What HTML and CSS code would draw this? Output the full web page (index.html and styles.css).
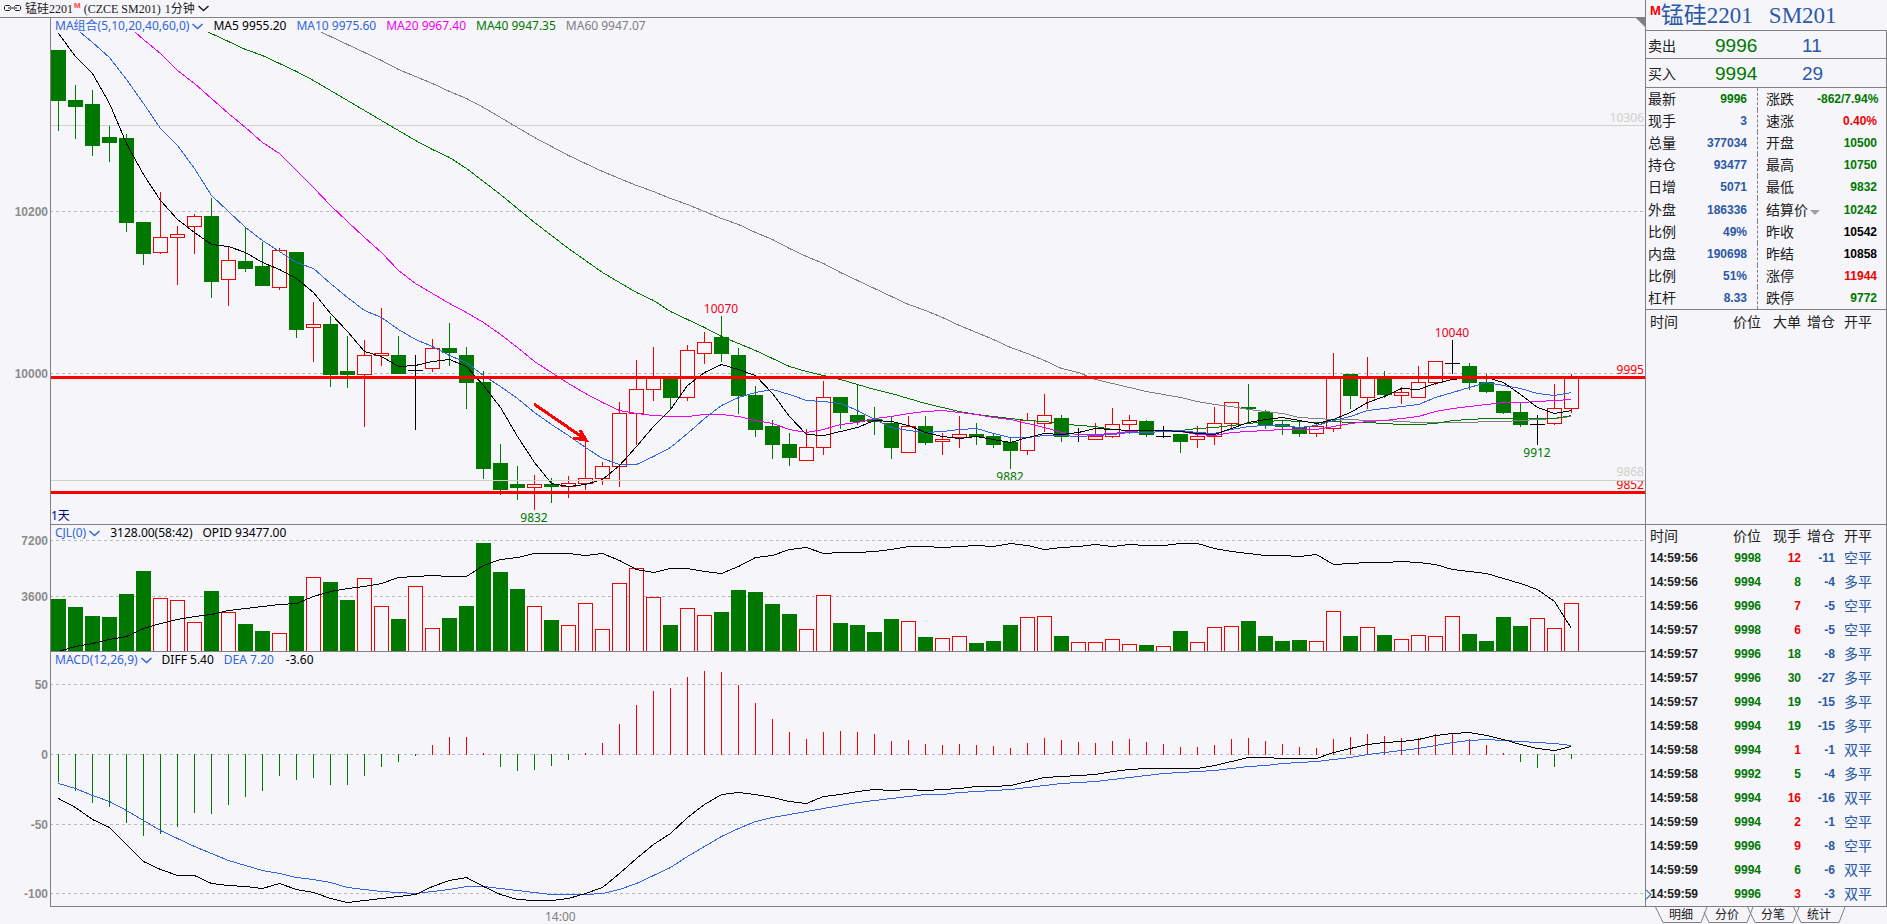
FILE: index.html
```html
<!DOCTYPE html>
<html lang="zh-CN">
<head>
<meta charset="utf-8">
<title>锰硅2201 SM201</title>
<link rel="stylesheet" href="styles.css">
</head>
<body>
<div class="app">
  <div class="work">
    <main class="charts">
      <header class="topbar">
        <svg class="link-icon" width="17" height="7" viewBox="0 0 17 7" aria-hidden="true"><path d="M6.500 2V1.500L5.500 .500H1.500L.500 1.500V4.500L1.500 5.500H5.500L6.500 4.500V4M10.500 2V1.500L11.500 .500H15.500L16.500 1.500V4.500L15.500 5.500H11.500L10.500 4.500V4M4 3H13"/></svg>
        <span class="name">锰硅2201</span><sup class="flag">M</sup><span class="code">(CZCE SM201)</span>
        <button class="drop" type="button">1分钟<svg class="chev" width="11" height="7" viewBox="0 0 11 7" aria-hidden="true"><path d="M.5 1L5.500 5.500L10.500 1"/></svg></button>
      </header>
      <section class="pane" aria-label="K线">
        <svg class="plot" id="price"></svg>
        <div class="legend">
          <button class="drop blue" type="button">MA组合(5,10,20,40,60,0)<svg class="chev" width="11" height="7" viewBox="0 0 11 7" aria-hidden="true"><path d="M.5 1L5.500 5.500L10.500 1"/></svg></button>
          <span>MA5 9955.20</span><span class="blue">MA10 9975.60</span><span class="pink">MA20 9967.40</span><span class="green">MA40 9947.35</span><span class="gray">MA60 9947.07</span>
        </div>
        <svg class="corner" width="9" height="9" viewBox="0 0 9 9" aria-hidden="true"><path d="M0 0H9V9Z"/></svg>
      </section>
      <section class="pane" aria-label="成交量">
        <svg class="plot" id="volume"></svg>
        <div class="legend">
          <button class="drop blue" type="button">CJL(0)<svg class="chev" width="11" height="7" viewBox="0 0 11 7" aria-hidden="true"><path d="M.5 1L5.500 5.500L10.500 1"/></svg></button>
          <span>3128.00(58:42)</span><span>OPID 93477.00</span>
        </div>
      </section>
      <section class="pane" aria-label="MACD">
        <svg class="plot" id="macd"></svg>
        <div class="legend">
          <button class="drop blue" type="button">MACD(12,26,9)<svg class="chev" width="11" height="7" viewBox="0 0 11 7" aria-hidden="true"><path d="M.5 1L5.500 5.500L10.500 1"/></svg></button>
          <span>DIFF 5.40</span><span class="blue">DEA 7.20</span><span class="bar-value">-3.60</span>
        </div>
      </section>
    </main>
    <aside class="side">
      <h1 class="title"><sup>M</sup><span>锰硅2201</span><span>SM201</span></h1>
      <div class="offer"><span>卖出</span><b class="green">9996</b><b class="navy">11</b></div>
      <div class="offer bid"><span>买入</span><b class="green">9994</b><b class="navy">29</b></div>
      <table class="quote">
        <tbody>
        <tr><th>最新</th><td class="green">9996</td><th>涨跌</th><td class="green">-862/7.94%</td></tr>
        <tr><th>现手</th><td>3</td><th>速涨</th><td class="red">0.40%</td></tr>
        <tr><th>总量</th><td>377034</td><th>开盘</th><td class="green">10500</td></tr>
        <tr><th>持仓</th><td>93477</td><th>最高</th><td class="green">10750</td></tr>
        <tr><th>日增</th><td>5071</td><th>最低</th><td class="green">9832</td></tr>
        <tr><th>外盘</th><td>186336</td><th>结算价<i class="tri"></i></th><td class="green">10242</td></tr>
        <tr><th>比例</th><td>49%</td><th>昨收</th><td class="black">10542</td></tr>
        <tr><th>内盘</th><td>190698</td><th>昨结</th><td class="black">10858</td></tr>
        <tr><th>比例</th><td>51%</td><th>涨停</th><td class="red">11944</td></tr>
        <tr><th>杠杆</th><td>8.33</td><th>跌停</th><td class="green">9772</td></tr>
        </tbody>
      </table>
      <div class="big">
        <table class="ticks">
          <thead><tr><th>时间</th><th>价位</th><th>大单</th><th>增仓</th><th>开平</th></tr></thead>
        </table>
      </div>
      <table class="ticks">
        <thead><tr><th>时间</th><th>价位</th><th>现手</th><th>增仓</th><th>开平</th></tr></thead>
        <tbody>
        <tr><td>14:59:56</td><td>9998</td><td class="red">12</td><td>-11</td><td>空平</td></tr>
        <tr><td>14:59:56</td><td>9994</td><td class="green">8</td><td>-4</td><td>多平</td></tr>
        <tr><td>14:59:56</td><td>9996</td><td class="red">7</td><td>-5</td><td>空平</td></tr>
        <tr><td>14:59:57</td><td>9998</td><td class="red">6</td><td>-5</td><td>空平</td></tr>
        <tr><td>14:59:57</td><td>9996</td><td class="green">18</td><td>-8</td><td>多平</td></tr>
        <tr><td>14:59:57</td><td>9996</td><td class="green">30</td><td>-27</td><td>多平</td></tr>
        <tr><td>14:59:57</td><td>9994</td><td class="green">19</td><td>-15</td><td>多平</td></tr>
        <tr><td>14:59:58</td><td>9994</td><td class="green">19</td><td>-15</td><td>多平</td></tr>
        <tr><td>14:59:58</td><td>9994</td><td class="red">1</td><td>-1</td><td>双平</td></tr>
        <tr><td>14:59:58</td><td>9992</td><td class="green">5</td><td>-4</td><td>多平</td></tr>
        <tr><td>14:59:58</td><td>9994</td><td class="red">16</td><td>-16</td><td>双平</td></tr>
        <tr><td>14:59:59</td><td>9994</td><td class="red">2</td><td>-1</td><td>空平</td></tr>
        <tr><td>14:59:59</td><td>9996</td><td class="red">9</td><td>-8</td><td>空平</td></tr>
        <tr><td>14:59:59</td><td>9994</td><td class="green">6</td><td>-6</td><td>双平</td></tr>
        <tr class="last"><td>14:59:59</td><td>9996</td><td class="red">3</td><td>-3</td><td>双平</td></tr>
        </tbody>
      </table>
    </aside>
  </div>
  <footer class="foot">
    <div class="time-axis"><time>14:00</time></div>
    <nav class="tabs">
      <button type="button"><svg viewBox="0 0 54 16" width="54" height="16" aria-hidden="true"><path d="M.5 0L8 15.500H46L52 0"/></svg>明细</button>
      <button type="button"><svg viewBox="0 0 54 16" width="54" height="16" aria-hidden="true"><path d="M3 5L8 15.500H46L52 0"/></svg>分价</button>
      <button type="button"><svg viewBox="0 0 54 16" width="54" height="16" aria-hidden="true"><path d="M.5 0L8 15.500H46L52 0"/></svg>分笔</button>
      <button type="button"><svg viewBox="0 0 54 16" width="54" height="16" aria-hidden="true"><path d="M.5 0L8 15.500H46L52 0"/></svg>统计</button>
    </nav>
  </footer>
</div>
<script src="chart.js"></script>
</body>
</html>
```
FILE: styles.css
```css
:root {
  --bg: #f5f5fa;
  --frame: #808080;
  --red: #f00000;
  --green: #007800;
  --blue: #3264dc;
  --navy: #2c58a6;
  --ui: "Noto Sans", "Noto Sans CJK SC", sans-serif;
  --num: "Liberation Sans", "Noto Sans CJK SC", sans-serif;
}
* { box-sizing: border-box; }
body { margin: 0; background: var(--bg); color: #000; font: 12px/16px var(--ui); }
button { border: 0; padding: 0; background: none; color: inherit; font: inherit; }
svg { flex: none; }

.app { display: flex; flex-direction: column; min-height: 100vh; }
.work { flex: 1; display: flex; }
.charts { flex: 1; min-width: 0; display: grid; grid-template-rows: 18px minmax(0, 507fr) minmax(0, 127fr) minmax(0, 255fr); }

.topbar { display: flex; align-items: center; padding-left: 4px; border-bottom: 1px solid var(--frame); font-family: "Liberation Serif", "Noto Sans CJK SC", serif; color: #202020; white-space: nowrap; }
.topbar .name { margin-left: 4px; }
.topbar .flag { align-self: flex-start; margin: 2px 3px 0 1px; color: #ff4040; font: bold 8px/8px "Liberation Sans", sans-serif; }
.topbar .drop { margin-left: 4px; }
.link-icon path { fill: none; stroke: #202020; }
.drop { display: flex; align-items: center; gap: 3px; white-space: nowrap; }
.chev path { fill: none; stroke: currentColor; stroke-width: 1.5; }

.pane { position: relative; min-height: 0; }
.plot { position: absolute; inset: 0; width: 100%; height: 100%; display: block; }
.legend { position: relative; display: flex; gap: 10px; height: 16px; padding-left: 55px; white-space: nowrap; }
.bar-value { margin-left: 2px; }
.corner { position: absolute; top: 0; right: 0; fill: var(--frame); }

.blue { color: var(--blue); }
.pink { color: #f000f0; }
.gray { color: #808080; }
.navy { color: var(--navy); }
.plot * { shape-rendering: crispEdges; }
.plot text { font: 12px var(--ui); }
.plot .axis { font: bold 12px "Liberation Sans", sans-serif; fill: #8c8c8c; text-anchor: end; }
.frame { stroke: var(--frame); }
.grid { stroke: #b8b8c0; stroke-dasharray: 3 3; }
.level { stroke: #d0d0c8; }
.support { stroke: #f00; stroke-width: 3; }
.line { fill: none; stroke-width: 1; }
.up { fill: var(--red); }
.down { fill: var(--green); }
.flat { fill: #000; }
.hollow { fill: var(--bg); stroke: var(--red); }
.arrow { fill: none; stroke: #f00; stroke-width: 3; }

.side { width: 242px; display: flex; flex-direction: column; border: solid var(--frame); border-width: 0 1px 1px; color: #202020; }
.title { display: flex; height: 31px; margin: 0 -1px 0 0; padding-left: 4px; border-bottom: 1px solid var(--frame); background: var(--bg); color: var(--navy); font: 23px/32px "Liberation Serif", "Noto Sans CJK SC", serif; white-space: nowrap; }
.title sup { margin-top: 4px; color: var(--red); font: bold 13px/13px "Liberation Sans", sans-serif; }
.title span + span { margin-left: 16px; }
.offer { display: grid; grid-template-columns: 67px 87px 1fr; align-items: center; height: 28px; padding: 2px 0 0 2px; border-bottom: 1px solid var(--frame); font-size: 14px; }
.offer.bid { height: 29px; }
.offer b { font: 19px/20px "Liberation Sans", sans-serif; }

table { width: 100%; border-spacing: 0; table-layout: fixed; }
th, td { padding: 0; text-align: right; white-space: nowrap; }
th { font-weight: 400; font-size: 14px; }
td { font: bold 12px/20px var(--num); color: var(--navy); }
.quote { height: 222px; border-bottom: 1px solid var(--frame); }
.quote th { width: 56px; height: 22px; padding-left: 2px; text-align: left; }
.quote td { width: 55px; padding-right: 10px; }
.quote th:nth-child(3) { border-left: 1px dashed var(--frame); padding-left: 8px; width: 60px; }
.quote td:nth-child(4) { width: 69px; padding-right: 9px; }
.tri { display: inline-block; margin-left: 2px; border: 5px solid transparent; border-top-color: #a0a0a0; border-bottom: 0; }

.big { flex: 1; border-bottom: 1px solid var(--frame); }
.ticks th:nth-child(1), .ticks td:nth-child(1) { width: 61px; padding-left: 4px; text-align: left; }
.ticks th:nth-child(2) { width: 54px; }
.ticks th:nth-child(3) { width: 40px; }
.ticks th:nth-child(4) { width: 34px; }
.ticks th:nth-child(5), .ticks td:nth-child(5) { padding-left: 9px; text-align: left; }
.ticks th { height: 21px; line-height: 21px; }
.big th { height: 24px; line-height: 24px; }
.ticks td { height: 24px; }
.ticks td:nth-child(1) { color: #202020; }
.ticks td:nth-child(2) { color: var(--green); }
.ticks td:nth-child(5) { font-size: 14px; font-weight: 400; }
.ticks .last td:first-child { position: relative; }
.ticks .last td:first-child::before { content: ""; position: absolute; left: -3px; top: 9px; width: 6px; height: 6px; border: solid #2864b4; border-width: 1px 1px 0 0; transform: rotate(45deg); }

.red, td.red { color: var(--red); }
.green, td.green { color: var(--green); }
td.black { color: #000; }

.foot { display: flex; height: 17px; }
.time-axis { flex: 1; padding-left: 545px; color: #808080; line-height: 19px; }
.tabs { display: flex; width: 242px; padding-left: 10px; color: #202020; }
.tabs button { position: relative; width: 46px; flex: none; height: 16px; padding-left: 6px; line-height: 16px; }
.tabs svg { position: absolute; left: 0; top: 0; fill: none; stroke: var(--frame); }
```
FILE: chart.js
```js
const STEP = 17;
const FIRST = 58;
const AXIS = 50;

// kind, high, body top, body bottom, low
const candles = `g50,50,101,131 g85,100,107,139 g90,104,146,156 g126,137,143,162 g134,138,223,232 g222,222,254,265
r192,237,253,254 r226,234,238,285 r214,216,227,254 g198,216,282,298 r247,260,280,306 g227,261,269,272 g242,266,286,286
r248,250,288,290 g252,252,330,338 r302,324,328,362 g316,324,375,387 g336,371,375,388 r340,355,375,427 r308,353,356,366
g336,355,374,374 b355,370,371,430 r339,348,369,372 g323,348,353,366 g347,355,383,409 g371,382,469,479 g444,463,490,495
g466,484,488,500 r475,484,488,510 g478,484,487,503 r476,483,487,498 r440,478,484,490 r462,466,479,485 r402,413,467,487
r360,389,414,445 r347,377,390,401 g378,378,398,410 r345,350,398,401 r332,342,354,364 g316,337,354,362 g348,355,396,414
g386,395,430,437 g420,426,445,459 g433,444,458,466 r429,447,461,461 r381,397,448,455 g397,397,413,429 g384,415,422,425
g407,419,422,435 g417,423,448,459 r416,426,453,453 g416,426,443,445 r433,439,442,455 r416,434,438,448 g423,434,437,445
g434,436,445,448 g437,442,451,469 r413,420,451,455 r394,415,424,432 g415,418,437,442 b428,436,437,442 r423,436,440,440
r408,424,437,438 r415,420,425,434 g420,421,435,437 b426,436,437,438 g434,434,442,453 r426,436,440,448 r407,423,437,445
r402,402,424,429 g384,407,409,422 g410,412,425,429 g420,424,427,435 g420,427,434,437 r423,426,434,437 r353,377,429,432
g374,374,396,409 r357,378,398,409 g371,378,395,398 r387,392,396,404 r366,382,398,398 r361,361,383,385 b340,363,364,374
g363,366,383,390 g374,382,392,393 g391,391,413,414 g403,412,425,427 b415,424,425,445 r384,408,424,425 r374,377,409,413`
  .split(/\s+/).map(s => [s[0], ...s.slice(1).split(',').map(Number)]);

const ma5 = [33,56,73,103,143,174,200,219,232,244,246,252,262,269,278,292,313,331,351,356,366,365,361,359,366,385,407,436,462,483,486,484,479,465,446,426,409,385,372,364,369,375,393,416,434,435,431,427,420,421,425,432,436,438,436,439,442,437,433,434,432,428,429,430,430,430,431,433,434,428,422,419,417,420,423,419,412,402,396,388,389,383,379,377,377,382,394,407,413,410];
const ma10 = [42,57,79,103,128,145,168,195,211,227,240,251,262,268,283,297,310,317,329,339,346,355,362,375,386,398,412,424,435,447,458,464,464,456,447,433,418,405,397,392,389,394,400,401,403,410,419,427,430,432,431,429,428,433,437,437,435,435,436,435,434,432,432,431,430,432,433,429,426,425,425,427,425,420,416,410,408,406,404,397,392,387,382,385,388,393,395,392];
const ma20 = [39,53,70,83,98,113,127,142,153,170,187,205,221,237,252,270,283,293,303,312,322,334,347,361,372,383,393,402,410,413,415,416,416,414,414,416,420,423,429,432,429,424,422,418,416,413,411,410,412,414,417,419,423,427,432,434,434,433,431,430,431,431,434,435,432,431,430,429,429,429,426,423,421,420,418,416,411,408,406,404,402,402,401,400,399];
const ma40 = [41,49,55,63,71,80,90,100,110,120,130,140,149,157,168,181,194,208,222,235,248,260,272,282,292,300,311,319,327,336,343,350,358,366,371,375,379,384,389,393,398,403,407,411,414,416,418,420,421,423,425,426,429,430,430,430,430,428,427,425,423,421,420,421,422,421,422,422,423,424,424,423,420,419,418,418,418,418,418,415];
const ma60 = [36,44,52,60,69,76,83,91,98,107,117,127,137,146,155,163,171,178,185,191,198,204,211,218,224,232,239,248,256,263,272,280,288,296,304,310,317,325,332,339,347,353,360,368,372,379,383,387,391,394,397,401,404,406,409,411,413,417,418,419,419,420,420,421,422,422,422,422,421,421,420,419,418,416];

const volume = [599,607,616,617,594,571,598,600,622,591,612,624,631,633,596,577,582,600,578,606,619,586,628,618,606,543,572,589,606,620,625,603,629,583,568,597,625,608,615,612,590,592,604,614,629,595,623,625,632,619,621,637,638,636,643,641,625,617,616,636,642,642,639,644,645,646,631,642,627,626,621,636,641,640,641,611,636,627,635,639,635,636,616,634,641,617,626,618,628,603];
const opid = [651,646,643,639,636,628,623,619,616,614,610,608,606,604,603,596,591,588,586,583,577,576,575,576,576,565,559,557,553,553,553,555,553,560,569,572,568,568,571,573,566,557,555,549,547,553,552,552,551,549,546,546,547,546,545,546,543,545,549,547,546,544,546,544,545,545,543,543,548,551,553,555,555,556,554,564,563,562,562,561,562,564,569,571,573,578,583,589,601,628];

const hist = [782,791,803,807,823,836,834,827,813,814,805,797,791,776,780,778,785,785,776,767,762,756,745,737,737,753,767,771,770,766,760,753,743,724,705,691,688,677,671,672,685,703,719,732,739,732,731,732,734,741,740,744,745,744,745,746,748,743,738,740,742,743,741,739,742,744,747,747,745,739,738,741,744,747,748,739,737,734,736,738,738,734,734,739,745,753,762,768,767,759];
const diff = [798,807,819,827,844,861,869,875,875,883,885,886,888,883,889,892,898,902,900,898,896,894,886,880,877,886,894,899,900,900,898,893,887,873,858,844,833,817,804,794,792,794,797,801,803,796,794,791,789,790,789,790,789,788,786,786,785,781,777,776,775,774,771,769,768,768,768,768,765,761,757,757,758,758,758,752,748,744,742,741,739,735,733,732,735,739,744,748,750,746];
const dea = [783,788,795,801,810,820,830,838,846,853,860,865,870,873,877,879,882,887,889,891,892,893,891,889,886,886,888,890,892,894,894,894,893,889,883,875,867,856,846,836,828,821,817,814,811,808,805,802,800,798,796,794,794,792,791,790,789,787,785,783,782,781,779,777,775,773,772,771,770,768,766,765,763,762,761,759,757,754,752,750,748,745,742,740,739,740,741,742,743,745];

const centre = i => FIRST + i * STEP;

function pane(id, top, base) {
  const svg = document.getElementById(id);
  const w = svg.clientWidth, h = svg.clientHeight, k = h / base;
  const Y = y => Math.round((y - top) * k);
  const out = [];
  const p = {
    w, h, Y, out,
    rect(cls, x, y1, y2, width = 1) {
      out.push(`<rect class="${cls}" x="${x}" y="${Y(y1)}" width="${width}" height="${Math.max(1, Y(y2) - Y(y1))}"/>`);
    },
    hollow(x, y1, y2) {
      out.push(`<rect class="hollow" x="${x + 0.5}" y="${Y(y1) + 0.5}" width="14" height="${Math.max(1, Y(y2) - Y(y1) - 1)}"/>`);
    },
    across(cls, y) {
      out.push(`<line class="${cls}" x1="${AXIS}" x2="${w}" y1="${Y(y) + 0.5}" y2="${Y(y) + 0.5}"/>`);
    },
    text(s, x, y, fill, anchor = 'middle') {
      out.push(`<text x="${x}" y="${Y(y)}" fill="${fill}" text-anchor="${anchor}">${s}</text>`);
    },
    scale(s, y) {
      p.across('grid', y);
      out.push(`<text class="axis" x="48" y="${Y(y) + 5}">${s}</text>`);
    },
    // Series are aligned to the newest bar; start is an optional lead-in point.
    line(values, color, start) {
      const from = candles.length - values.length;
      const pts = values.map((v, i) => `${centre(from + i) + 0.5},${Y(v) + 0.5}`);
      if (start) pts.unshift(`${start[0]},${Y(start[1])}`);
      out.push(`<polyline class="line" stroke="${color}" points="${pts.join(' ')}"/>`);
    },
    done() {
      out.push(`<path class="frame" fill="none" d="M${AXIS + 0.5} 0V${h - 0.5}H${w}"/>`);
      svg.innerHTML = out.join('');
    }
  };
  return p;
}

function drawPrice() {
  const p = pane('price', 18, 507);
  p.scale('10200', 211);
  p.scale('10000', 373);
  p.across('level', 125);
  candles.forEach(([kind, high, top, bottom, low], i) => {
    const x = centre(i);
    const cls = { g: 'down', r: 'up', b: 'flat' }[kind];
    p.rect(cls, x, high, low);
    if (kind === 'r') p.hollow(x - 7, top, bottom);
    else p.rect(cls, x - 7, top, bottom, 15);
  });
  p.line(ma60, '#808080', [321, 32]);
  p.line(ma40, '#007800', [208, 32]);
  p.line(ma20, '#f000f0', [135, 32]);
  p.line(ma10, '#3264dc', [80, 32]);
  p.line(ma5, '#000');
  p.text('10070', centre(39), 313, '#f00020');
  p.text('9832', centre(28), 522, '#007800');
  p.text('9882', centre(56), 481, '#007800');
  p.text('10040', centre(82), 337, '#f00020');
  p.text('9912', centre(87), 457, '#007800');
  p.text('10306', p.w - 1, 122, '#d0d0c8', 'end');
  p.text('9868', p.w - 1, 476, '#d0d0c8', 'end');
  p.text('9995', p.w - 1, 374, '#f00', 'end');
  p.text('9852', p.w - 1, 489, '#f00', 'end');
  p.across('level', 480);
  p.across('support', 377);
  p.across('support', 492);
  p.out.push(`<path class="arrow" d="M534 ${p.Y(404)}L585 ${p.Y(439)}M580 ${p.Y(430)}L586 ${p.Y(440)}L573 ${p.Y(438)}"/>`);
  p.text('1天', AXIS + 1, 520, '#000090', 'start');
  p.done();
}

function drawVolume() {
  const p = pane('volume', 525, 127);
  p.scale('7200', 540);
  p.scale('3600', 596);
  volume.forEach((top, i) => {
    if (candles[i][0] === 'g') p.rect('down', centre(i) - 7, top, 651, 15);
    else p.hollow(centre(i) - 7, top, 653);
  });
  p.line(opid, '#000');
  p.done();
}

function drawMacd() {
  const p = pane('macd', 652, 255);
  p.scale('50', 684);
  p.scale('0', 754);
  p.scale('-50', 824);
  p.scale('-100', 893);
  hist.forEach((end, i) => {
    if (end < 754) p.rect('up', centre(i), end, 755);
    else p.rect('down', centre(i), 754, end);
  });
  p.line(dea, '#3264dc');
  p.line(diff, '#000');
  p.done();
}

function draw() {
  drawPrice();
  drawVolume();
  drawMacd();
}

addEventListener('resize', draw);
draw();
```
